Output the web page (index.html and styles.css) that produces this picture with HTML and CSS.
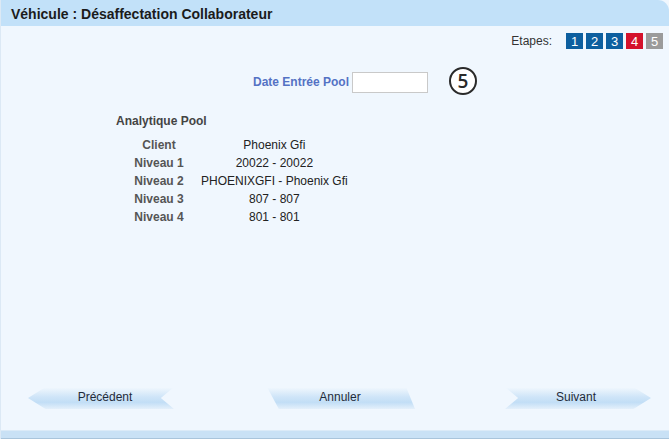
FILE: index.html
```html
<!DOCTYPE html>
<html lang="fr">
<head>
<meta charset="utf-8">
<link rel="stylesheet" href="styles.css">
</head>
<body>
<div class="window">
  <div class="titlebar">Véhicule : Désaffectation Collaborateur</div>
  <div class="content">
    <div class="steps">
      <span class="steps-label">Etapes:</span>
      <span class="step done">1</span>
      <span class="step done">2</span>
      <span class="step done">3</span>
      <span class="step current">4</span>
      <span class="step todo">5</span>
    </div>
    <div class="date-row">
      <label class="date-label">Date Entrée Pool</label>
      <input class="date-input" type="text">
      <span class="circle-num">5</span>
    </div>
    <div class="analytique">
      <div class="section-title">Analytique Pool</div>
      <table class="ana-table">
        <tr><th>Client</th><td>Phoenix Gfi</td></tr>
        <tr><th>Niveau 1</th><td>20022 - 20022</td></tr>
        <tr><th>Niveau 2</th><td>PHOENIXGFI - Phoenix Gfi</td></tr>
        <tr><th>Niveau 3</th><td>807 - 807</td></tr>
        <tr><th>Niveau 4</th><td>801 - 801</td></tr>
      </table>
    </div>
    <div class="buttons">
      <div class="btn btn-prev">Précédent</div>
      <div class="btn btn-cancel">Annuler</div>
      <div class="btn btn-next">Suivant</div>
    </div>
  </div>
  <div class="bottombar"></div>
</div>
</body>
</html>
```

FILE: styles.css
```css
html, body {
  margin: 0;
  padding: 0;
  background: #eef6fd;
}
body {
  font-family: "Liberation Sans", Arial, sans-serif;
  font-size: 12px;
  color: #222;
}
.window {
  width: 669px;
  height: 439px;
  display: flex;
  flex-direction: column;
  background: #f0f7fe;
  box-sizing: border-box;
  border-left: 1px solid #dce9f5;
}
.titlebar {
  height: 26px;
  flex: none;
  background: #c2e1f9;
  border-top-right-radius: 11px;
  font-weight: bold;
  font-size: 14px;
  color: #1b1b1b;
  padding-left: 10px;
  line-height: 28px;
}
.content {
  flex: 1;
  display: flex;
  flex-direction: column;
}
.steps {
  display: flex;
  justify-content: flex-end;
  align-items: center;
  gap: 3px;
  padding-top: 7px;
  padding-right: 6px;
}
.steps-label {
  color: #333;
  margin-right: 11px;
}
.step {
  width: 17px;
  height: 16px;
  color: #fff;
  font-size: 13px;
  line-height: 17px;
  text-align: center;
}
.step.done { background: #0d5f9f; }
.step.current { background: #d4122c; }
.step.todo { background: #9b9b9b; }
.date-row {
  display: flex;
  align-items: center;
  margin-top: 18px;
  padding-left: 252px;
}
.date-label {
  font-weight: bold;
  color: #5472c4;
  padding-top: 2px;
}
.date-input {
  width: 76px;
  height: 21px;
  box-sizing: border-box;
  border: 1px solid #c9c9c9;
  background: #fff;
  margin: 2px 0 0 3px;
  padding: 0;
}
.circle-num {
  width: 28px;
  height: 28px;
  box-sizing: border-box;
  border: 2px solid #2a2a2a;
  border-radius: 50%;
  background: #fff;
  margin-left: 21px;
  display: flex;
  align-items: center;
  justify-content: center;
  font-size: 19px;
  font-weight: 600;
  color: #2a2a2a;
  font-family: "Open Sans", "Liberation Sans", sans-serif;
}
.analytique {
  padding-left: 115px;
  margin-top: 19px;
}
.section-title {
  font-weight: bold;
  color: #444;
}
.ana-table {
  border-collapse: collapse;
  margin-top: 8px;
  margin-left: 1px;
}
.ana-table th {
  width: 84px;
  font-weight: bold;
  color: #555;
  text-align: center;
  padding: 0;
  height: 18px;
  white-space: nowrap;
}
.ana-table td {
  width: 146px;
  text-align: center;
  padding: 0;
  color: #222;
  height: 18px;
  white-space: nowrap;
}
.buttons {
  margin-top: auto;
  margin-bottom: 21px;
  display: flex;
  align-items: center;
}
.btn {
  height: 22px;
  line-height: 21px;
  text-align: center;
  color: #1f2b3a;
  box-sizing: border-box;
  background: linear-gradient(to bottom, #f2f8fe 0%, #cfe5f8 45%, #c2def6 70%, #e4f0fb 100%);
}
.btn-prev {
  width: 146px;
  margin-left: 27px;
  clip-path: polygon(0 50%, 12% 0, 100% 0, 91% 50%, 100% 100%, 12% 100%);
  padding-left: 8px;
}
.btn-cancel {
  width: 148px;
  margin-left: 93px;
  clip-path: polygon(0 0, 94% 0, 100% 100%, 8% 100%);
  padding-right: 2px;
}
.btn-next {
  width: 146px;
  margin-left: 90px;
  clip-path: polygon(0 0, 88% 0, 100% 50%, 88% 100%, 0 100%, 9% 50%);
  padding-right: 4px;
}
.bottombar {
  height: 7px;
  flex: none;
  background: #c9e1f5;
  border-top: 1px solid #dbeaf7;
  border-bottom: 1px solid #a9c4db;
}
```
